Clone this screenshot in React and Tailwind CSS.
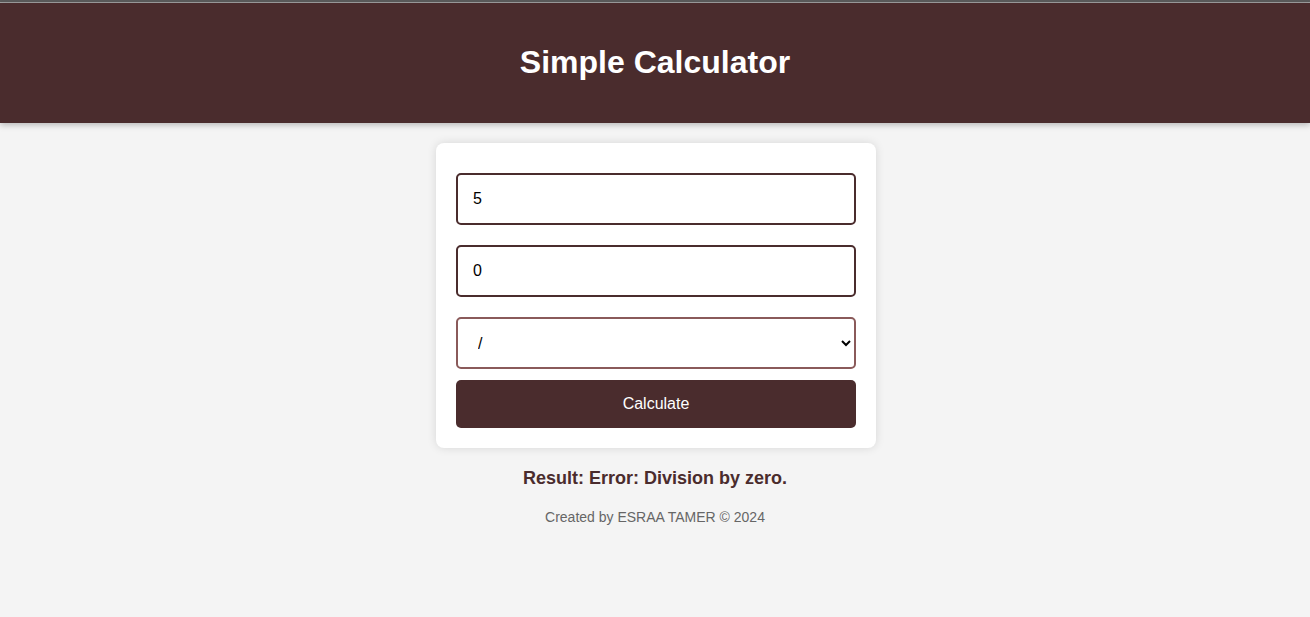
import React, { useState } from "react";

const App = () => {
  const [num1, setNum1] = useState("5");
  const [num2, setNum2] = useState("0");
  const [op, setOp] = useState("/");
  const [result, setResult] = useState("Error: Division by zero.");

  const calculate = () => {
    const a = parseFloat(num1);
    const b = parseFloat(num2);
    if (isNaN(a) || isNaN(b)) return setResult("Please enter valid numbers.");
    if (op === "+") setResult(a + b);
    else if (op === "-") setResult(a - b);
    else if (op === "*") setResult(a * b);
    else if (b === 0) setResult("Error: Division by zero.");
    else setResult(a / b);
  };

  return (
    <div className="min-h-[617px] bg-[#f4f4f4] font-['Liberation_Sans',Arial,sans-serif]">
      <div className="h-[2px] bg-[#5b5b5b]" />
      <div className="h-px bg-[#a0a0a0]" />
      <header className="h-[120px] pb-0.5 bg-[#4a2c2d] flex items-center justify-center shadow-[0_2px_6px_rgba(0,0,0,0.25)]">
        <h1 className="text-[32px] font-bold text-white">Simple Calculator</h1>
      </header>

      <div className="w-[440px] ml-[calc(50%-219px)] mt-5 bg-white rounded-lg p-5 flex flex-col shadow-[0_0_10px_rgba(0,0,0,0.12)]">
        <input
          type="number"
          value={num1}
          onChange={(e) => setNum1(e.target.value)}
          className="mt-2.5 mb-2.5 h-[52px] w-full px-[15px] text-base text-black border-2 border-[#4a2c2d] rounded-[5px] outline-none"
        />
        <input
          type="number"
          value={num2}
          onChange={(e) => setNum2(e.target.value)}
          className="mt-2.5 mb-2.5 h-[52px] w-full px-[15px] text-base text-black border-2 border-[#4a2c2d] rounded-[5px] outline-none"
        />
        <select
          value={op}
          onChange={(e) => setOp(e.target.value)}
          className="mt-2.5 mb-[11px] h-[52px] w-full pl-4 pr-1 text-base text-black bg-white border-2 border-[#8a5a5a] rounded-[5px] outline-none"
        >
          <option value="+">+</option>
          <option value="-">-</option>
          <option value="*">*</option>
          <option value="/">/</option>
        </select>
        <button
          onClick={calculate}
          className="h-[48px] w-full bg-[#4a2c2d] text-white text-base rounded-[5px] hover:bg-[#5d3a3b]"
        >
          Calculate
        </button>
      </div>

      <p className="mt-4 text-center text-lg font-bold text-[#4a2c2d]">Result: {result}</p>
      <p className="mt-[15px] text-center text-sm text-[#666]">Created by ESRAA TAMER © 2024</p>
    </div>
  );
};

export default App;
